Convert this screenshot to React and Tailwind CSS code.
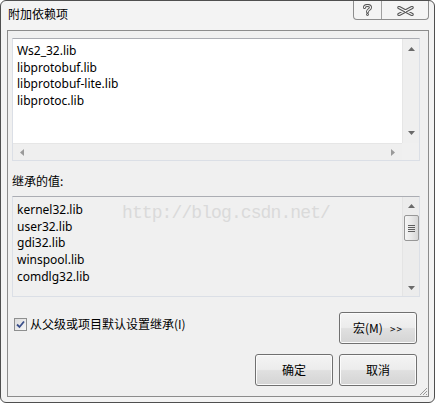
import React from "react";

function UpArrow() {
  return (
    <svg width="7" height="4" viewBox="0 0 7 4">
      <polygon points="0,4 3.5,0 7,4" fill="#6a6a6a" />
    </svg>
  );
}
function DownArrow() {
  return (
    <svg width="7" height="4" viewBox="0 0 7 4">
      <polygon points="0,0 3.5,4 7,0" fill="#6a6a6a" />
    </svg>
  );
}
function LeftArrow() {
  return (
    <svg width="4" height="7" viewBox="0 0 4 7">
      <polygon points="4,0 0,3.5 4,7" fill="#9a9a9a" />
    </svg>
  );
}
function RightArrow() {
  return (
    <svg width="4" height="7" viewBox="0 0 4 7">
      <polygon points="0,0 4,3.5 0,7" fill="#9a9a9a" />
    </svg>
  );
}

function Btn({ children, className = "" }) {
  return (
    <div
      className={
        "h-[32px] w-[78px] rounded-[3px] border border-[#707070] bg-[linear-gradient(180deg,#f4f4f4_0%,#ececec_48%,#e0e0e0_52%,#d4d4d4_100%)] shadow-[inset_0_0_0_1px_#fbfbfb] flex items-center justify-center text-[12px] text-black " +
        className
      }
    >
      {children}
    </div>
  );
}

export default function App() {
  return (
    <div className="relative w-[436px] h-[404px] bg-white font-['Noto_Sans','Noto_Sans_CJK_SC',sans-serif] text-[12px] text-black">
      <div className="w-[435px] h-[403px] rounded-[6px] border border-[#4f4f4f] bg-[#f3f3f3] flex flex-col pl-[6px] pr-[5px] pb-[5px]">
        {/* title bar */}
        <div className="h-[29px] flex items-start">
          <span className="mt-[5px] ml-[1px] leading-[16px] font-['Noto_Sans_CJK_SC',sans-serif]">附加依赖项</span>
          <div className="ml-auto flex h-[19px] w-[76px] rounded-b-[4px] border border-t-0 border-[#8d8d8d] bg-[#f4f4f4]">
            <div className="w-[28px] border-r border-[#a0a0a0] flex items-center justify-center">
              <svg width="9" height="12" viewBox="0 0 9 12">
                <path d="M1.5 3.5 C1.5 0.8 7.5 0.8 7.5 3.5 C7.5 5.5 4.5 5.5 4.5 7.8" fill="none" stroke="#555" strokeWidth="3" strokeLinecap="round" />
                <path d="M1.5 3.5 C1.5 0.8 7.5 0.8 7.5 3.5 C7.5 5.5 4.5 5.5 4.5 7.8" fill="none" stroke="#f4f4f4" strokeWidth="1.2" strokeLinecap="round" />
                <circle cx="4.5" cy="10.5" r="1.4" fill="#555" />
                <circle cx="4.5" cy="10.5" r="0.5" fill="#f4f4f4" />
              </svg>
            </div>
            <div className="flex-1 flex items-center justify-center pt-[1px]">
              <svg width="17" height="10" viewBox="0 0 17 10">
                <path d="M2 1.5 L15 8.5 M15 1.5 L2 8.5" fill="none" stroke="#555" strokeWidth="3.4" strokeLinecap="round" />
                <path d="M2 1.5 L15 8.5 M15 1.5 L2 8.5" fill="none" stroke="#f4f4f4" strokeWidth="1.4" strokeLinecap="round" />
              </svg>
            </div>
          </div>
        </div>

        {/* client */}
        <div className="relative flex-1 border border-[#8c8c8c] bg-[#f0f0f0] flex flex-col pl-[4px] pr-[8px]">
          {/* top box */}
          <div className="mt-[7px] h-[123px] border border-[#dbdfe6] border-t-[#abadb3] bg-white flex flex-col">
            <div className="flex-1 flex min-h-0">
              <div className="flex-1 pl-[4px] pt-[4px] leading-[16.7px]">
                <div>Ws2_32.lib</div>
                <div>libprotobuf.lib</div>
                <div>libprotobuf-lite.lib</div>
                <div>libprotoc.lib</div>
              </div>
              <div className="w-[17px] bg-[#efefef] border-l border-[#e6e6e6] flex flex-col items-center justify-between py-[8px]">
                <UpArrow />
                <DownArrow />
              </div>
            </div>
            <div className="h-[17px] flex">
              <div className="flex-1 bg-[#efefef] border-t border-[#e6e6e6] flex items-center justify-between px-[7px]">
                <LeftArrow />
                <RightArrow />
              </div>
              <div className="w-[17px] bg-[#f0f0f0]" />
            </div>
          </div>

          <div className="mt-[12px] leading-[16px] font-['Noto_Sans_CJK_SC',sans-serif]">继承的值:</div>

          {/* inherited box */}
          <div className="mt-[7px] h-[101px] border border-[#dbdfe6] border-t-[#abadb3] bg-[#f0f0f0] flex">
            <div className="flex-1 pl-[4px] pt-[5px] leading-[16.7px]">
              <div>kernel32.lib</div>
              <div>user32.lib</div>
              <div>gdi32.lib</div>
              <div>winspool.lib</div>
              <div>comdlg32.lib</div>
            </div>
            <div className="w-[17px] bg-[#ececec] border-l border-[#e4e4e4] flex flex-col items-center">
              <div className="h-[17px] flex items-center justify-center">
                <UpArrow />
              </div>
              <div className="mt-[1px] w-[15px] h-[26px] rounded-[2px] border border-[#979797] bg-[linear-gradient(90deg,#f5f5f5_0%,#e8e8e8_50%,#d6d6d6_100%)] flex flex-col items-center justify-center gap-[1px]">
                <div className="w-[7px] h-[1px] bg-[#5e5e5e]" />
                <div className="w-[7px] h-[1px] bg-[#5e5e5e]" />
                <div className="w-[7px] h-[1px] bg-[#5e5e5e]" />
                <div className="w-[7px] h-[1px] bg-[#5e5e5e]" />
              </div>
              <div className="mt-auto h-[17px] flex items-center justify-center">
                <DownArrow />
              </div>
            </div>
          </div>

          {/* bottom rows */}
          <div className="mt-[15px] flex items-start pr-[3px]">
            <div className="ml-[2px] mt-[6px] w-[13px] h-[13px] border border-[#8e8f8f] bg-[linear-gradient(135deg,#dcdcdc,#f6f6f6)] flex items-center justify-center">
              <svg width="9" height="9" viewBox="0 0 9 9">
                <path d="M1 4.5 L3.5 7 L8 1.5" fill="none" stroke="#3a4f8a" strokeWidth="1.8" />
              </svg>
            </div>
            <span className="ml-[3px] mt-[4px] leading-[16px] font-['Noto_Sans_CJK_SC',sans-serif]">从父级或项目默认设置继承(I)</span>
            <Btn className="ml-auto font-['Noto_Sans_CJK_SC',sans-serif]">
              宏(M)<span className="ml-[7px] text-[10px] tracking-[1px]">&gt;&gt;</span>
            </Btn>
          </div>
          <div className="mt-[10px] flex justify-end gap-[6px] pr-[3px]">
            <Btn className="font-['Noto_Sans_CJK_SC',sans-serif]">确定</Btn>
            <Btn className="font-['Noto_Sans_CJK_SC',sans-serif]">取消</Btn>
          </div>

          {/* resize grip */}
          <svg className="absolute right-0 bottom-0" width="9" height="9" viewBox="0 0 9 9">
            <path d="M8 1 L1 8 M8 4 L4 8 M8 7 L7 8" stroke="#9a9a9a" strokeWidth="1" />
          </svg>
        </div>
      </div>

      {/* watermark */}
      <div className="absolute left-[122px] top-[202px] leading-[22px] text-[18px] tracking-[-0.9px] text-[#dadada] font-['Liberation_Mono',monospace]">
        http://blog.csdn.net/
      </div>
    </div>
  );
}
